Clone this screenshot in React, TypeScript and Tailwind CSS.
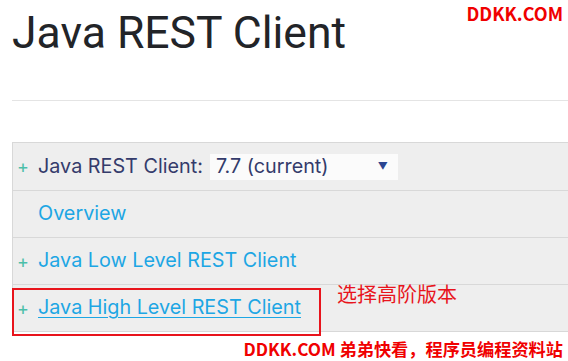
import React from 'react';

const rows = [
  { label: 'Overview', plus: false, underline: false },
  { label: 'Java Low Level REST Client', plus: true, underline: false },
  { label: 'Java High Level REST Client', plus: true, underline: true },
];

const App: React.FC = () => {
  return (
    <div className="relative h-[361px] w-[568px] overflow-hidden bg-white font-['Inter','Roboto',sans-serif]">
      <div className="pl-3">
        <h1 className="pt-[5px] font-['Roboto',sans-serif] text-[44.5px] leading-[56px] text-[#222428]">Java REST Client</h1>
        <div className="mt-[39px] h-px bg-[#e4e4e4]" />

        <div className="mt-[41px] border-l border-t border-[#d8d8d8] bg-[#eeeeee] text-[19.8px]">
          <div className="flex h-[48px] items-center border-b border-[#d8d8d8]">
            <span className="w-[25px] pl-[4px] text-[18px] text-[#4bbfa9]">+</span>
            <span className="text-[#343b6b]">Java REST Client:</span>
            <div className="ml-[7px] flex h-[26px] w-[188px] items-center justify-between bg-[#fbfbfb] pl-[6px] pr-[10px]">
              <span className="text-[#343b6b]">7.7 (current)</span>
              <span className="text-[10px] text-[#2b4590]">▼</span>
            </div>
          </div>
          {rows.map((r) => (
            <div key={r.label} className="flex h-[47px] items-center border-b border-[#d8d8d8]">
              <span className="w-[25px] pl-[4px] text-[18px] text-[#4bbfa9]">{r.plus ? '+' : ''}</span>
              <a href="#" className={r.underline ? 'text-[#1da6e4] underline underline-offset-[3px]' : 'text-[#1da6e4]'}>
                {r.label}
              </a>
            </div>
          ))}
        </div>
      </div>

      {/* annotation overlays */}
      <div className="absolute left-[12px] top-[288px] h-[48px] w-[309px] border-2 border-[#e8141c]" />
      <div className="absolute left-[337px] top-[279px] font-['Noto_Sans_CJK_SC',sans-serif] text-[20px] text-[#e8141c]">
        选择高阶版本
      </div>
      <div className="absolute right-[5px] top-[0px] font-['Noto_Sans_CJK_SC',sans-serif] text-[18px] font-bold text-[#f00000]">
        DDKK.COM
      </div>
      <div className="absolute bottom-[0px] right-[5px] font-['Noto_Sans_CJK_SC',sans-serif] text-[17.2px] font-bold leading-[24px] text-[#f00000]">
        DDKK.COM 弟弟快看，程序员编程资料站
      </div>
    </div>
  );
};

export default App;
